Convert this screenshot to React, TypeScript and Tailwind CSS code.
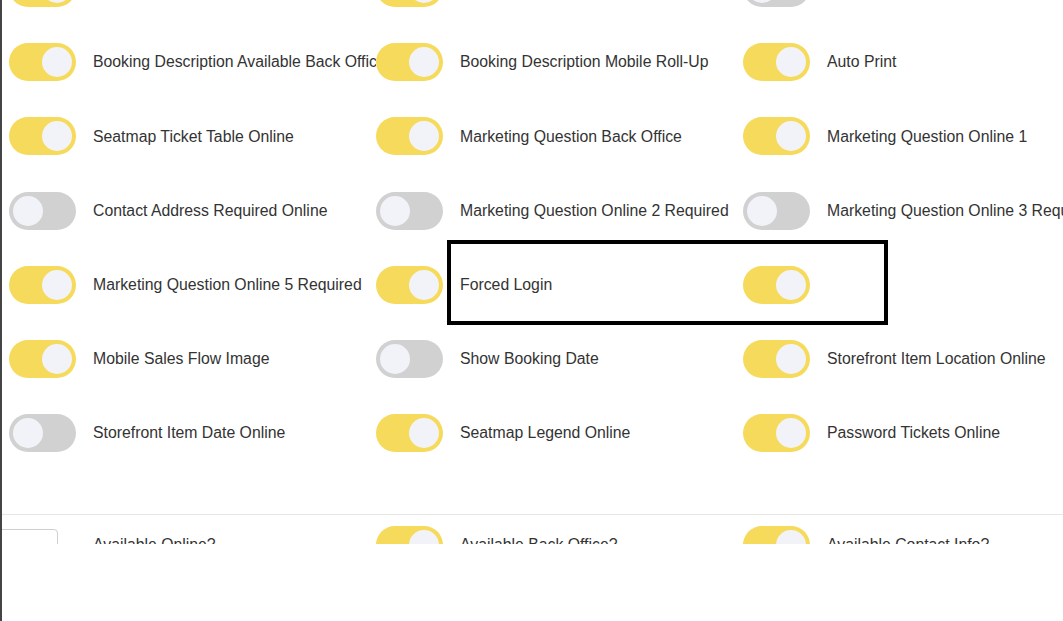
import React from "react";

type Setting = { label: string; on: boolean };

const rows: Setting[][] = [
  [
    { label: "Show Seatmap Online", on: true },
    { label: "Show Seatmap Back Office", on: true },
    { label: "Hide Prices Online", on: false },
  ],
  [
    { label: "Booking Description Available Back Office", on: true },
    { label: "Booking Description Mobile Roll-Up", on: true },
    { label: "Auto Print", on: true },
  ],
  [
    { label: "Seatmap Ticket Table Online", on: true },
    { label: "Marketing Question Back Office", on: true },
    { label: "Marketing Question Online 1", on: true },
  ],
  [
    { label: "Contact Address Required Online", on: false },
    { label: "Marketing Question Online 2 Required", on: false },
    { label: "Marketing Question Online 3 Required", on: false },
  ],
  [
    { label: "Marketing Question Online 5 Required", on: true },
    { label: "Forced Login", on: true },
    { label: "", on: true },
  ],
  [
    { label: "Mobile Sales Flow Image", on: true },
    { label: "Show Booking Date", on: false },
    { label: "Storefront Item Location Online", on: true },
  ],
  [
    { label: "Storefront Item Date Online", on: false },
    { label: "Seatmap Legend Online", on: true },
    { label: "Password Tickets Online", on: true },
  ],
];

function Toggle({ on }: { on: boolean }) {
  return (
    <div
      className={
        "flex h-[38px] w-[67px] shrink-0 items-center rounded-full px-[4px] " +
        (on ? "justify-end bg-[#F6DA5B]" : "justify-start bg-[#D1D1D1]")
      }
    >
      <div className="h-[30px] w-[30px] rounded-full bg-[#F1F3F8]" />
    </div>
  );
}

function Cell({ setting }: { setting: Setting }) {
  return (
    <div className="flex h-[74.2px] items-center gap-[17px] overflow-hidden whitespace-nowrap">
      <Toggle on={setting.on} />
      <span className="text-[15.8px] text-[#333]">{setting.label}</span>
    </div>
  );
}

export default function App() {
  return (
    <div
      className="relative h-[621px] w-[1063px] overflow-hidden border-l-2 border-[#454545] bg-white"
      style={{ fontFamily: '"Liberation Sans", Arial, sans-serif' }}
    >
      <div className="h-[544px] overflow-hidden">
        <div className="-mt-[49px] grid grid-cols-[367px_367px_367px] pl-[7px]">
          {rows.flat().map((s, i) => (
            <Cell key={i} setting={s} />
          ))}
        </div>

        <div className="mt-[44px] border-t border-[#E6E6E6]" />

        <div className="mt-[11px] grid grid-cols-[367px_367px_367px] pl-[7px]">
          <div className="flex h-[38px] items-center gap-[17px] whitespace-nowrap">
            <div className="w-[67px] shrink-0">
              <div className="-ml-[16px] mt-[7px] h-[40px] w-[65px] rounded-[4px] border border-[#CFCFCF] bg-white" />
            </div>
            <span className="text-[15.8px] text-[#333]">Available Online?</span>
          </div>
          <div className="flex h-[38px] items-center gap-[17px] whitespace-nowrap">
            <Toggle on />
            <span className="text-[15.8px] text-[#333]">Available Back Office?</span>
          </div>
          <div className="flex h-[38px] items-center gap-[17px] whitespace-nowrap">
            <Toggle on />
            <span className="text-[15.8px] text-[#333]">Available Contact Info?</span>
          </div>
        </div>
      </div>

      <div className="absolute left-[445px] top-[240px] h-[85px] w-[441px] border-4 border-black" />
    </div>
  );
}
